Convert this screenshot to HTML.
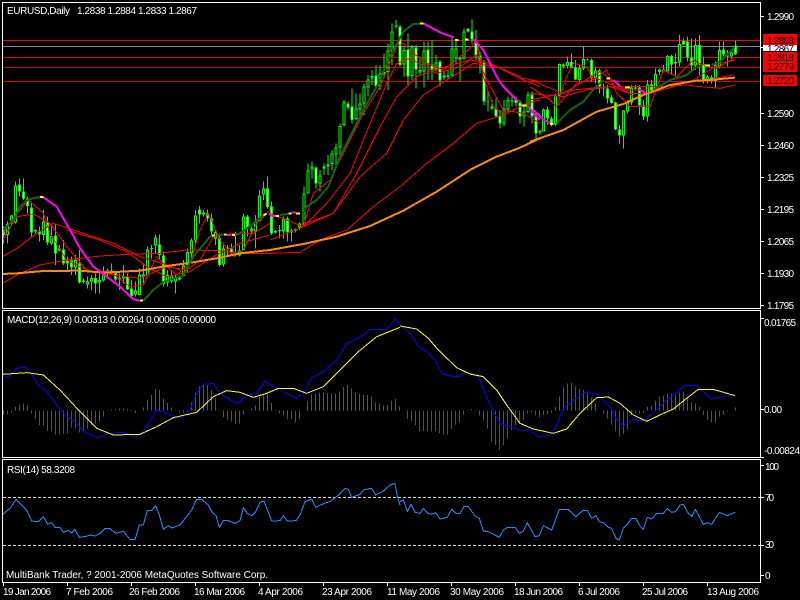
<!DOCTYPE html>
<html><head><meta charset="utf-8"><title>EURUSD Daily</title>
<style>html,body{margin:0;padding:0;background:#000;width:800px;height:600px;overflow:hidden}
svg{display:block}
text{font-family:"Liberation Sans",sans-serif;font-size:10px;fill:#fff}
.c path{fill:none}
.l{fill:none;stroke-linejoin:round;shape-rendering:crispEdges}
</style></head><body>
<svg width="800" height="600" viewBox="0 0 800 600" xmlns="http://www.w3.org/2000/svg">
<rect width="800" height="600" fill="#000"/>
<g shape-rendering="crispEdges" fill="none" stroke-width="1">
<path d="M3 40.5H760" stroke="#f00"/>
<path d="M3 46.5H760" stroke="#789"/>
<path d="M3 57.5H760M3 67.5H760M3 81.5H760" stroke="#d80000"/>
</g>

<!-- candles -->
<g class="c" shape-rendering="crispEdges" transform="translate(.17,0) scale(.33333)">
<path stroke="#0f0" stroke-width="3" d="M10 680V730M22 665V730M34 645V675M46 545V670M58 535V590M70 535V600M82 590V640M94 610V710M106 688V700M118 680V725M130 630V720M142 650V735M154 670V735M166 670V795M178 735V755M190 720V795M202 770V810M214 770V825M226 765V825M238 750V850M250 835V850M262 830V865M274 825V870M286 820V880M298 820V880M310 800V845M322 805V830M334 790V825M346 815V845M358 820V870M370 795V850M382 820V870M394 840V890M406 845V890M418 805V885M430 790V850M442 740V830M454 735V775M466 703V760M478 703V780M490 755V860M502 810V860M514 810V850M526 820V880M538 826V842M550 780V830M562 745V815M574 715V790M586 630V730M598 618V670M610 630V650M622 628V665M634 640V710M646 690V735M658 700V800M670 730V800M682 735V765M694 730V760M706 695V770M718 735V770M730 640V750M742 645V710M754 680V700M766 645V745M778 570V665M790 545V600M802 530V625"/>
<path stroke="#0f0" stroke-width="9" d="M10 682V705M22 672V705M34 647V662M46 556V668M58 553V575M70 574V596M82 596V618M94 622V697M106 690V694M118 694V703M130 664V705M142 666V728M154 708V730M166 706V760M178 746V752M190 748V790M202 781V791M214 781V803M226 780V802M238 790V848M250 842V846M262 844V854M274 834V845M286 834V851M298 840V848M310 818V842M322 811V821M334 812V818M346 819V838M358 834V838M370 828V836M382 829V868M394 866V888M406 872V884M418 823V885M430 823V830M442 748V826M454 744V747M466 712V737M478 733V765M490 767V852M502 825V848M514 826V844M526 832V845M538 832V838M550 796V828M562 756V795M574 721V760M586 646V721M598 628V644M610 638V644M622 640V656M634 655V694M646 696V716M658 714V795M670 745V793M682 743V746M694 745V760M706 760V765M718 751V767M730 650V750M742 650V683M754 686V694M766 663V695M778 586V663M790 565V584M802 565V621"/>
<path stroke="#fff" stroke-width="3" d="M10 685V702M58 556V572M70 577V593M82 599V615M94 625V694M118 697V700M142 669V725M166 709V757M190 751V787M202 784V788M214 784V800M238 793V845M286 837V848M346 822V835M382 832V865M394 869V885M478 736V762M490 770V849M598 631V641M622 643V653M634 658V691M658 717V792M694 748V757M742 653V680M802 568V618"/>
<path stroke="#000" stroke-width="3" d="M22 675V702M34 650V659M46 559V665M130 667V702M154 711V727M226 783V799M262 847V851M274 837V842M298 843V845M310 821V839M322 814V818M370 831V833M406 875V881M418 826V882M430 826V827M442 751V823M466 715V734M502 828V845M514 829V841M526 835V842M550 799V825M562 759V792M574 724V757M586 649V718M646 699V713M670 748V790M718 754V764M730 653V747M766 666V692M778 589V660M790 568V581"/>
</g>
<g class="c" shape-rendering="crispEdges" transform="translate(270.5,0) scale(.33333)">
<path stroke="#0f0" stroke-width="3" d="M3 605V705M15 690V700M27 675V715M39 650V715M51 650V725M63 685V725M75 685V698M87 668V690M100 560V675M112 490V580M124 485V535M136 500V565M148 510V575M160 490V525M172 465V525M184 450V510M196 430V495M208 370V475M220 300V380M232 305V330M244 265V370M256 280V360M268 280V350M280 250V345M292 225V290M304 210V255M316 195V265M328 195V270M340 160V235M352 130V270M364 70V195M376 60V85M388 75V200M400 140V230M412 100V260M424 135V240M436 135V265M448 170V225M460 125V262M472 125V240M484 120V240M496 165V215M508 180V260M520 215V240M532 210V235M544 110V230M556 120V190M568 170V245M580 85V180M592 85V98M604 58V130M616 90V180M628 155V220M640 180V315M652 270V335M664 300V330M676 295V350M688 330V385M700 300V380M712 290V340M724 285V320M736 290V320M748 300V370M760 320V380M772 275V340M784 275V370M796 340V420M808 390V405"/>
<path stroke="#0f0" stroke-width="9" d="M3 619V700M15 693V697M27 690V693M39 657V694M51 655V697M63 691V698M75 687V692M87 670V682M100 580V672M112 511V580M124 499V509M136 503V551M148 527V551M160 499V505M172 493V500M184 461V492M196 443V463M208 378V443M220 306V375M232 310V323M244 319V360M256 325V357M268 310V328M280 260V310M292 238V263M304 228V236M316 226V260M328 220V260M340 216V222M352 151V216M364 94V154M376 76V80M388 79V195M400 150V194M412 148V230M424 140V228M436 142V208M448 210V218M460 151V215M472 148V193M484 193V208M496 187V208M508 184V242M520 226V232M532 226V231M544 145V226M556 145V176M568 172V178M580 94V176M592 86V95M604 94V118M616 118V167M628 166V184M640 187V304M652 303V305M664 320V326M676 325V350M688 346V371M700 325V371M712 300V328M724 301V305M736 298V309M748 307V349M760 334V350M772 283V336M784 283V350M796 347V400M808 393V398"/>
<path stroke="#fff" stroke-width="3" d="M3 622V697M51 658V694M136 506V548M232 313V320M244 322V357M316 229V257M388 82V192M412 151V227M436 145V205M472 151V190M484 196V205M508 187V239M592 89V92M604 97V115M616 121V164M628 169V181M640 190V301M676 328V347M688 349V368M736 301V306M748 310V346M784 286V347M796 350V397"/>
<path stroke="#000" stroke-width="3" d="M39 660V691M63 694V695M87 673V679M100 583V669M112 514V577M124 502V506M148 530V548M172 496V497M184 464V489M196 446V460M208 381V440M220 309V372M256 328V354M268 313V325M280 263V307M292 241V260M304 231V233M328 223V257M352 154V213M364 97V151M400 153V191M424 143V225M448 213V215M460 154V212M496 190V205M544 148V223M556 148V173M580 97V173M700 328V368M712 303V325M760 337V347M772 286V333"/>
</g>
<g class="c" shape-rendering="crispEdges" transform="translate(530.5,0) scale(.33333)">
<path stroke="#0f0" stroke-width="3" d="M39 325V395M51 320V375M63 350V380M75 280V378M87 190V290M99 190V205M111 170V205M123 160V205M135 180V240M147 195V245M159 140V210M171 175V182M183 175V245M195 200V250M207 205V280M219 250V290M231 255V310M243 285V310M255 305V390M267 375V430M279 330V445M291 300V340M303 255V315M315 255V270M327 255V345M339 300V360M351 240V365M363 240V275M375 205V270M387 205V225M399 195V215M411 165V215M423 165V225M435 160V230M447 105V200M459 115V135M471 110V185M483 115V215M495 115V210M507 105V225M519 170V250M531 225V250M543 225V250M555 185V265M567 125V205M579 125V170M591 150V200M603 155V175M615 122V165"/>
<path stroke="#0f0" stroke-width="9" d="M39 328V395M51 328V355M63 355V375M75 286V374M87 192V287M99 194V200M111 186V198M123 186V204M135 202V239M147 204V240M159 177V206M171 177V179M183 180V234M195 212V234M207 212V260M219 262V266M231 265V296M243 292V309M255 307V388M267 388V406M279 332V406M291 306V334M303 262V308M315 262V266M327 262V316M339 317V350M351 253V350M363 253V272M375 222V270M387 208V216M399 208V214M411 168V214M423 168V194M435 186V190M447 132V188M459 123V134M471 124V172M483 172V197M495 135V197M507 135V194M519 192V243M531 230V243M543 232V243M555 194V243M567 150V200M579 148V164M591 166V170M603 158V170M615 137V162"/>
<path stroke="#fff" stroke-width="3" d="M51 331V352M63 358V372M123 189V201M135 205V236M183 183V231M207 215V257M231 268V293M243 295V306M255 310V385M267 391V403M327 265V313M339 320V347M363 256V269M423 171V191M459 126V131M471 127V169M483 175V194M507 138V191M519 195V240M579 151V161M615 140V159"/>
<path stroke="#000" stroke-width="3" d="M39 331V392M75 289V371M87 195V284M111 189V195M147 207V237M159 180V203M195 215V231M279 335V403M291 309V331M303 265V305M351 256V347M375 225V267M387 211V213M411 171V211M447 135V185M495 138V194M531 233V240M543 235V240M555 197V240M567 153V197M603 161V167"/>
</g>

<!-- thin MAs -->
<g class="l" stroke="#f00" stroke-width="3">
<g transform="scale(.33333)">
<path d="M8 700L40 655 85 600 130 640 150 700 200 780 240 800 280 815 330 815 390 860 430 855 470 770 500 800 530 825 570 790 600 690 625 640 660 720 700 770 730 750 770 670 810 630"/>
<path d="M8 720L50 650 100 642 150 670 200 740 260 810 340 825 420 835 500 800 560 810 600 780 640 710 700 700 760 700 810 670"/>
<path d="M8 770L50 745 110 700 160 670 250 700 340 730 420 770 500 795 540 810"/>
<path d="M8 850L50 825 120 795 200 780 300 768 400 762 480 760 560 750 650 752 720 760 810 760"/>
<path d="M200 690L300 720 380 755 440 800 500 830 570 815 640 770 720 730 810 705"/>
</g>
<g transform="translate(270,0) scale(.33333)">
<path d="M0 640L100 680 130 580 180 540 230 440 280 340 330 260 380 140 400 130 430 160 480 195 520 210 600 145 620 120 640 230 670 320 700 345"/>
<path d="M100 680L170 610 240 520 280 420 350 250 380 190 420 175 500 220 570 200 620 165 650 240 700 330 760 340 810 370"/>
<path d="M95 675L190 640 260 520 330 380 380 290 440 230 510 205 600 180 660 190 760 235 810 245"/>
<path d="M0 720L100 680 190 640 270 530 350 460 400 360 460 285 530 240 610 190 680 200 760 240 810 260"/>
<path d="M0 760L90 757 150 720 230 690 310 620 390 560 470 490 550 430 620 370 700 345 770 310 810 300"/>
</g>
<g transform="translate(530,0) scale(.33333)">
<path d="M80 320L110 230 130 190 170 200 190 240 230 210 260 280 300 320 360 320 400 210 440 230 490 180 520 195 560 205 610 175"/>
<path d="M0 280L100 290 170 270 240 260 300 280 360 280 430 260 490 240 530 215 570 190 615 180"/>
<path d="M0 240L50 260 100 280 150 250 210 215 260 250 310 290"/>
<path d="M0 260L60 300 80 320 140 250 200 235 280 270 350 270"/>
<path d="M0 300L50 290 130 270 210 262 300 260 390 260 470 255 510 260 570 265 615 255"/>
<path d="M470 245L530 240 610 225"/>
</g>
</g>

<!-- orange -->
<g class="l" stroke="#ff8c00" stroke-width="6">
<path transform="scale(.33333)" d="M8 822L50 820 130 813 240 812 310 818 420 812 500 798 560 790 650 775 720 760 810 750"/>
<path transform="translate(270,0) scale(.33333)" d="M0 750L100 732 200 710 300 678 400 632 500 575 600 510 680 470 750 443 810 415"/>
<path transform="translate(530,0) scale(.33333)" d="M0 425L100 390 200 335 280 312 340 285 420 255 500 242 560 238 615 233"/>
</g>

<!-- coloured trend line -->
<g class="l" stroke-width="6">
<g transform="scale(.33333)">
<path stroke="#0a6a0a" d="M8 690L40 660 60 620 85 598 120 591M430 902L460 870 490 846 550 826 580 770 630 710 640 706M650 704L670 703M705 705L720 700 760 670 790 645"/>
<path stroke="#f0f" d="M130 592L170 620 210 690 240 745 280 800 320 830 360 860 400 898 420 902M680 705L695 705M805 642L812 642"/>
<path stroke="#ff0" d="M120 591H130M420 902H429M636 706H644M672 704H680M696 705H705M790 645L800 642"/>
</g>
<g transform="translate(270,0) scale(.33333)">
<path stroke="#0a6a0a" d="M30 645L55 642M100 640L110 620 140 600 175 560 210 470 240 410 280 330 320 260 360 170 400 95 430 72 450 71"/>
<path stroke="#f0f" d="M0 647L15 648M65 638L78 638M460 70L510 97 550 112M610 118L640 150 680 230 700 260 745 305M775 318L790 340 810 360"/>
<path stroke="#ff0" d="M17 648H27M55 641H65M78 641H90M450 71H460M555 120H565M585 118H595M755 317H770"/>
</g>
<g transform="translate(530,0) scale(.33333)">
<path stroke="#0a6a0a" d="M80 370L120 330 160 305 190 268 220 240M370 270L420 240 470 225 495 205 515 195M545 195L570 185 615 140"/>
<path stroke="#f0f" d="M10 330L40 358 60 370M250 240L270 258M325 268L350 280"/>
<path stroke="#ff0" d="M60 372H70M230 236H240M285 262H300M525 196H540"/>
</g>
</g>

<!-- MACD histogram -->
<g fill="none" stroke-width="3" shape-rendering="crispEdges">
<g transform="translate(.17,305) scale(.33333)">
<path stroke="#1a7a1a" d="M10 316V330M22 316V328M34 316V322M94 316V325M106 316V342M118 316V360M130 316V362M142 316V378M154 316V380M166 316V388M178 316V388M190 316V385M202 316V385M214 316V368M226 316V370M238 316V382M250 316V378M262 316V370M274 316V362M286 316V355M298 316V350M310 316V335M322 316V318M394 316V320M406 316V324M526 316V318M538 316V322M550 316V322M562 316V320M670 316V336M682 316V345M694 316V350M706 316V357M718 316V355M730 316V328M838 316V326M850 316V330M862 316V344M874 316V342M886 316V352M898 316V342M910 316V317"/>
<path stroke="#d82020" d="M46 316V306M58 316V298M70 316V296M82 316V302M334 316V314M346 316V312M358 316V311M370 316V310M382 316V314M430 316V308M442 316V285M454 316V270M466 316V252M478 316V255M490 316V280M502 316V294M514 316V308M574 316V292M586 316V263M598 316V244M610 316V238M622 316V240M634 316V255M646 316V280M658 316V315M754 316V310M766 316V302M778 316V275M790 316V268M802 316V262M814 316V294M826 316V315M922 316V288M934 316V268M946 316V265M958 316V263M970 316V262M982 316V264M994 316V265M1006 316V265M1018 316V260M1030 316V246M1042 316V240M1054 316V250M1066 316V262M1078 316V267M1090 316V270M1102 316V270M1114 316V275M1126 316V292M1138 316V296M1150 316V302M1162 316V300M1174 316V287M1186 316V282M1198 316V305"/>
</g>
<g transform="translate(400.17,305) scale(.33333)">
<path stroke="#1a7a1a" d="M22 316V342M34 316V348M46 316V360M58 316V380M70 316V378M82 316V380M94 316V380M106 316V378M118 316V384M130 316V388M142 316V388M154 316V372M166 316V358M178 316V352M190 316V328M226 316V318M238 316V332M250 316V345M262 316V370M274 316V410M286 316V420M298 316V435M310 316V420M322 316V400M334 316V375M346 316V360M358 316V355M370 316V345M382 316V325M394 316V322M406 316V332M418 316V338M430 316V330M442 316V328M454 316V322M610 316V326M622 316V340M634 316V358M646 316V380M658 316V395M670 316V385M682 316V372M694 316V330M706 316V322M718 316V325M730 316V322M910 316V330M922 316V345M934 316V352M946 316V352M958 316V335M970 316V328M982 316V320"/>
<path stroke="#d82020" d="M202 316V315M214 316V312M466 316V306M478 316V275M490 316V248M502 316V235M514 316V234M526 316V244M538 316V252M550 316V255M562 316V260M574 316V278M586 316V295M598 316V316M742 316V306M754 316V303M766 316V286M778 316V275M790 316V272M802 316V265M814 316V265M826 316V270M838 316V262M850 316V260M862 316V280M874 316V292M886 316V295M898 316V306M1006 316V308"/>
</g>
</g>
<!-- MACD lines -->
<g class="l" stroke-width="3">
<g transform="translate(0,305) scale(.33333)">
<path stroke="#0000ff" d="M8 216L30 213 50 190 75 186 90 200 115 240 140 260 170 300 200 335 230 355 250 380 290 398 330 385 370 382 405 397 430 380 470 315 510 330 540 340 570 315 590 265 610 238 640 235 660 265 690 285 715 295 740 270 770 265 795 228 820 245 850 260 890 280 910 265 935 218 970 200 1010 165 1040 115 1080 98 1110 73 1160 73 1185 42 1200 60"/>
<path stroke="#ff0" d="M8 208L80 203 130 210 180 255 240 320 290 370 340 390 420 388 470 365 520 338 590 322 640 275 680 257 720 262 760 277 800 265 835 250 880 250 920 265 970 245 1020 195 1075 140 1130 95 1200 67"/>
</g>
<g transform="translate(400,305) scale(.33333)">
<path stroke="#0000ff" d="M0 62L20 75 35 90 55 125 80 140 105 165 125 205 145 212 175 215 195 202 225 208 240 225 255 265 280 320 300 355 340 368 370 378 385 372 415 395 455 390 470 360 490 310 520 285 555 262 590 268 630 305 650 345 670 362 700 342 730 348 775 310 800 285 830 262 855 241 890 241 935 283 960 276 1005 268"/>
<path stroke="#ff0" d="M0 63L50 72 85 100 115 135 170 188 210 207 250 215 290 255 320 300 360 355 400 372 460 385 500 372 540 325 590 278 625 276 660 295 700 330 740 349 790 325 820 312 860 280 895 253 940 253 1005 272"/>
</g>
</g>

<!-- RSI -->
<g shape-rendering="crispEdges" fill="none" stroke="#ddd" stroke-dasharray="3 2">
<path d="M3 497.5H760M3 545.5H760"/>
</g>
<g class="l" stroke="#1e90ff" stroke-width="3">
<path transform="translate(0,455) scale(.33333)" d="M8 178L30 160 48 133 80 165 95 198 115 200 130 185 143 208 155 203 165 218 180 218 190 232 205 226 215 234 225 224 238 247 262 243 272 240 285 243 300 235 315 221 330 221 347 235 370 229 390 253 405 254 418 210 430 210 442 166 455 166 467 152 478 180 490 223 505 212 515 219 540 210 575 165 590 133 605 133 625 150 635 170 648 182 658 217 670 197 685 197 705 205 720 197 730 158 742 175 755 182 767 170 780 142 792 138 815 198 840 197 850 182 862 198 888 197 900 180 915 140 935 132 947 157 975 144 990 140 1010 125 1035 100 1045 103 1055 127 1080 118 1092 104 1115 100 1127 120 1150 108 1170 90 1185 85 1192 125 1200 150"/>
<path transform="translate(400,455) scale(.33333)" d="M0 140L10 135 22 170 33 148 45 172 60 175 70 160 83 175 95 178 107 173 120 192 142 187 155 163 168 175 180 175 192 155 205 155 225 183 238 190 250 228 265 230 298 247 310 225 322 217 345 217 358 235 370 228 382 203 405 245 418 242 430 212 455 225 478 163 505 163 527 185 550 166 562 166 575 190 588 182 598 200 610 203 625 217 635 220 648 250 658 255 670 220 682 208 695 190 707 190 718 210 730 223 742 187 755 192 770 175 790 175 802 160 815 172 827 170 840 150 850 148 865 175 876 184 886 163 910 208 922 203 935 208 958 172 982 182 1005 172"/>
</g>

<!-- frames and ticks -->
<g shape-rendering="crispEdges" fill="none" stroke="#fff" stroke-width="1">
<path d="M2.5 2.5H760.5V308.5H2.5ZM2.5 310.5H760.5V457.5H2.5ZM2.5 459.5H760.5V582.5H2.5Z"/>
<path d="M760 16.5h4M760 47.5h4M760 113.5h4M760 145.5h4M760 177.5h4M760 209.5h4M760 241.5h4M760 273.5h4M760 305.5h4M760 318.5h4M760 409.5h4M760 457.5h4M760 465.5h4M760 497.5h4M760 545.5h4M760 575.5h4"/>
<path d="M3.5 582v4M67.5 582v4M131.5 582v4M195.5 582v4M259.5 582v4M323.5 582v4M387.5 582v4M451.5 582v4M515.5 582v4M579.5 582v4M643.5 582v4M707.5 582v4"/>
</g>

<!-- price tags -->
<g shape-rendering="crispEdges">
<rect x="763" y="34" width="34" height="11" fill="#f00"/>
<rect x="763" y="45" width="34" height="6" fill="#fff"/>
<rect x="763" y="52" width="34" height="20" fill="#f00"/>
<rect x="763" y="75" width="34" height="11" fill="#f00"/>
</g>
<svg x="763" y="45" width="34" height="6" viewBox="763 45 34 6"><text x="767" y="52" textLength="27" style="fill:#000">1.2867</text></svg>
<g style="fill:#000">
<text x="767" y="44" textLength="27" style="fill:#000">1.2888</text>
<text x="767" y="61" textLength="27" style="fill:#000">1.2818</text>
<text x="767" y="70" textLength="27" style="fill:#000">1.2779</text>
<text x="767" y="84" textLength="27" style="fill:#000">1.2720</text>
</g>

<!-- text -->
<text x="7" y="14" textLength="63">EURUSD,Daily</text>
<text x="77" y="14" textLength="120">1.2838 1.2884 1.2833 1.2867</text>
<text x="767" y="20" textLength="27">1.2990</text>
<text x="767" y="117" textLength="27">1.2590</text>
<text x="767" y="149" textLength="27">1.2460</text>
<text x="767" y="181" textLength="27">1.2325</text>
<text x="767" y="213" textLength="27">1.2195</text>
<text x="767" y="245" textLength="27">1.2065</text>
<text x="767" y="277" textLength="27">1.1930</text>
<text x="767" y="309" textLength="27">1.1795</text>
<text x="7" y="323" textLength="209">MACD(12,26,9) 0.00313 0.00264 0.00065 0.00000</text>
<text x="764" y="326" textLength="32">0.01765</text>
<text x="764" y="413" textLength="18">0.00</text>
<text x="764" y="454" textLength="36">-0.00824</text>
<text x="7" y="473" textLength="68">RSI(14) 58.3208</text>
<text x="765" y="470" textLength="14">100</text>
<text x="765" y="501" textLength="9">70</text>
<text x="765" y="548" textLength="9">30</text>
<text x="765" y="579" textLength="5">0</text>
<text x="6" y="578" textLength="262">MultiBank Trader, ? 2001-2006 MetaQuotes Software Corp.</text>
<text x="3" y="595" textLength="48">19 Jan 2006</text>
<text x="66" y="595" textLength="47">7 Feb 2006</text>
<text x="129" y="595" textLength="51">26 Feb 2006</text>
<text x="194" y="595" textLength="51">16 Mar 2006</text>
<text x="258" y="595" textLength="45">4 Apr 2006</text>
<text x="322" y="595" textLength="50">23 Apr 2006</text>
<text x="387" y="595" textLength="53">11 May 2006</text>
<text x="450" y="595" textLength="54">30 May 2006</text>
<text x="514" y="595" textLength="49">18 Jun 2006</text>
<text x="578" y="595" textLength="42">6 Jul 2006</text>
<text x="642" y="595" textLength="46">25 Jul 2006</text>
<text x="707" y="595" textLength="52">13 Aug 2006</text>
</svg>
</body></html>
